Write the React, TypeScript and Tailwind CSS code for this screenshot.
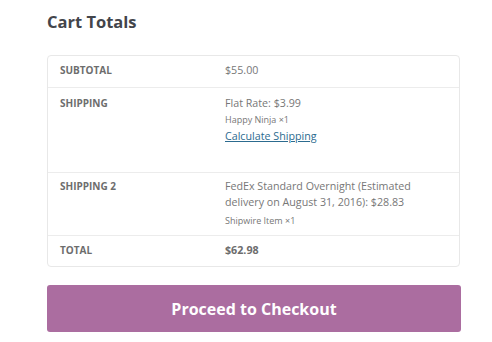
import React from "react";

const rowBase = "grid grid-cols-[177px_1fr] px-0";

export default function App() {
  return (
    <div className="w-[492px] h-[342px] bg-white font-['Open_Sans',sans-serif] px-[47px] pt-[10px]">
      <h2 className="text-[16.5px] leading-[24px] font-bold text-[#43454b]">Cart Totals</h2>

      <div className="mt-[21px] w-[413px] border border-[#e8e8e8] rounded-[4px]">
        {/* subtotal */}
        <div className={`${rowBase} border-b border-[#ececec] pt-[6px] pb-[9px]`}>
          <div className="pl-3 text-[10px] leading-[16px] font-bold uppercase text-[#6d6d6d]">Subtotal</div>
          <div className="text-[10.7px] leading-[16px] text-[#777]">$55.00</div>
        </div>

        {/* shipping */}
        <div className={`${rowBase} border-b border-[#ececec] pt-[7px] h-[85px]`}>
          <div className="pl-3 text-[10px] leading-[16px] font-bold uppercase text-[#6d6d6d]">Shipping</div>
          <div className="text-[#777]">
            <div className="text-[10.7px] leading-[16px]">Flat Rate: $3.99</div>
            <div className="text-[9px] leading-[14px] mt-[2px]">Happy Ninja ×1</div>
            <a className="block text-[10.7px] leading-[16px] mt-[1px] text-[#2c6b8f] underline">Calculate Shipping</a>
          </div>
        </div>

        {/* shipping 2 */}
        <div className={`${rowBase} border-b border-[#ececec] pt-[5px] h-[63px]`}>
          <div className="pl-3 text-[10px] leading-[16px] font-bold uppercase text-[#6d6d6d]">Shipping 2</div>
          <div className="text-[#777] pr-4">
            <div className="text-[10.7px] leading-[16px]">FedEx Standard Overnight (Estimated delivery on August 31, 2016): $28.83</div>
            <div className="text-[9px] leading-[14px] mt-[4px]">Shipwire Item ×1</div>
          </div>
        </div>

        {/* total */}
        <div className={`${rowBase} pt-[6px] pb-[8px]`}>
          <div className="pl-3 text-[10px] leading-[16px] font-bold uppercase text-[#6d6d6d]">Total</div>
          <div className="text-[10.7px] leading-[16px] font-bold text-[#6d6d6d]">$62.98</div>
        </div>
      </div>

      <button className="mt-[18px] w-[414px] h-[47px] rounded-[3px] bg-[#ab6da0] text-white text-[16px] font-bold">
        Proceed to Checkout
      </button>
    </div>
  );
}
